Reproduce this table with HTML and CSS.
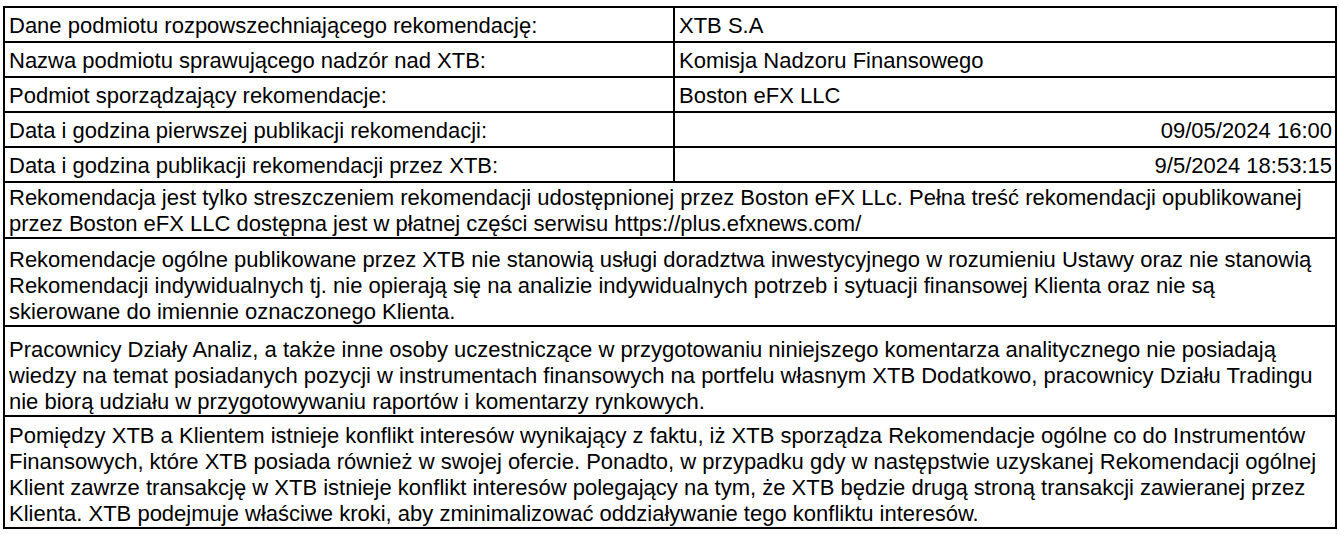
FILE: index.html
```html
<!DOCTYPE html>
<html lang="pl">
<head>
<meta charset="utf-8">
<title>Rekomendacja</title>
<link rel="stylesheet" href="styles.css">
</head>
<body>
<table class="info">
  <tbody>
    <tr class="row-single">
      <td class="label">Dane podmiotu rozpowszechniającego rekomendację:</td>
      <td class="value">XTB S.A</td>
    </tr>
    <tr class="row-single">
      <td class="label">Nazwa podmiotu sprawującego nadzór nad XTB:</td>
      <td class="value">Komisja Nadzoru Finansowego</td>
    </tr>
    <tr class="row-single">
      <td class="label">Podmiot sporządzający rekomendacje:</td>
      <td class="value">Boston eFX LLC</td>
    </tr>
    <tr class="row-single">
      <td class="label">Data i godzina pierwszej publikacji rekomendacji:</td>
      <td class="value num">09/05/2024 16:00</td>
    </tr>
    <tr class="row-single">
      <td class="label">Data i godzina publikacji rekomendacji przez XTB:</td>
      <td class="value num">9/5/2024 18:53:15</td>
    </tr>
    <tr class="row-2">
      <td class="text" colspan="2">Rekomendacja jest tylko streszczeniem rekomendacji udostępnionej przez Boston eFX LLc. Pełna treść rekomendacji opublikowanej przez Boston eFX LLC dostępna jest w płatnej części serwisu https://plus.efxnews.com/</td>
    </tr>
    <tr class="row-3a">
      <td class="text" colspan="2">Rekomendacje ogólne publikowane przez XTB nie stanowią usługi doradztwa inwestycyjnego w rozumieniu Ustawy oraz nie stanowią Rekomendacji indywidualnych tj. nie opierają się na analizie indywidualnych potrzeb i sytuacji finansowej Klienta oraz nie są skierowane do imiennie oznaczonego Klienta.</td>
    </tr>
    <tr class="row-3b">
      <td class="text" colspan="2">Pracownicy Działy Analiz, a także inne osoby uczestniczące w przygotowaniu niniejszego komentarza analitycznego nie posiadają wiedzy na temat posiadanych pozycji w instrumentach finansowych na portfelu własnym XTB Dodatkowo, pracownicy Działu Tradingu nie biorą udziału w przygotowywaniu raportów i komentarzy rynkowych.</td>
    </tr>
    <tr class="row-4">
      <td class="text" colspan="2">Pomiędzy XTB a Klientem istnieje konflikt interesów wynikający z faktu, iż XTB sporządza Rekomendacje ogólne co do Instrumentów Finansowych, które XTB posiada również w swojej ofercie. Ponadto, w przypadku gdy w następstwie uzyskanej Rekomendacji ogólnej Klient zawrze transakcję w XTB istnieje konflikt interesów polegający na tym, że XTB będzie drugą stroną transakcji zawieranej przez Klienta. XTB podejmuje właściwe kroki, aby zminimalizować oddziaływanie tego konfliktu interesów.</td>
    </tr>
  </tbody>
</table>
</body>
</html>
```

FILE: styles.css
```css
html, body {
  margin: 0;
  padding: 0;
  background: #ffffff;
}

body {
  font-family: "Liberation Sans", Arial, sans-serif;
  font-size: 22px;
  line-height: 26px;
  color: #000000;
}

.info {
  box-sizing: border-box;
  width: 1334px;
  margin: 6px 0 0 3px;
  border-collapse: separate;
  border-spacing: 0;
  table-layout: fixed;
  border-top: 2px solid #000;
  border-left: 2px solid #000;
}

.info td {
  border-right: 2px solid #000;
  border-bottom: 2px solid #000;
  padding: 0 4px 0 4px;
  vertical-align: bottom;
  white-space: normal;
  overflow: hidden;
}

.info .label {
  width: 660px;
}

.info .num {
  text-align: right;
  padding-right: 3px;
}

.row-single td { height: 31px; padding-bottom: 2px; }
.row-2 td { height: 54px; }
.row-3a td { height: 86px; }
.row-3b td { height: 88px; }
.row-4 td { height: 110px; }
```
